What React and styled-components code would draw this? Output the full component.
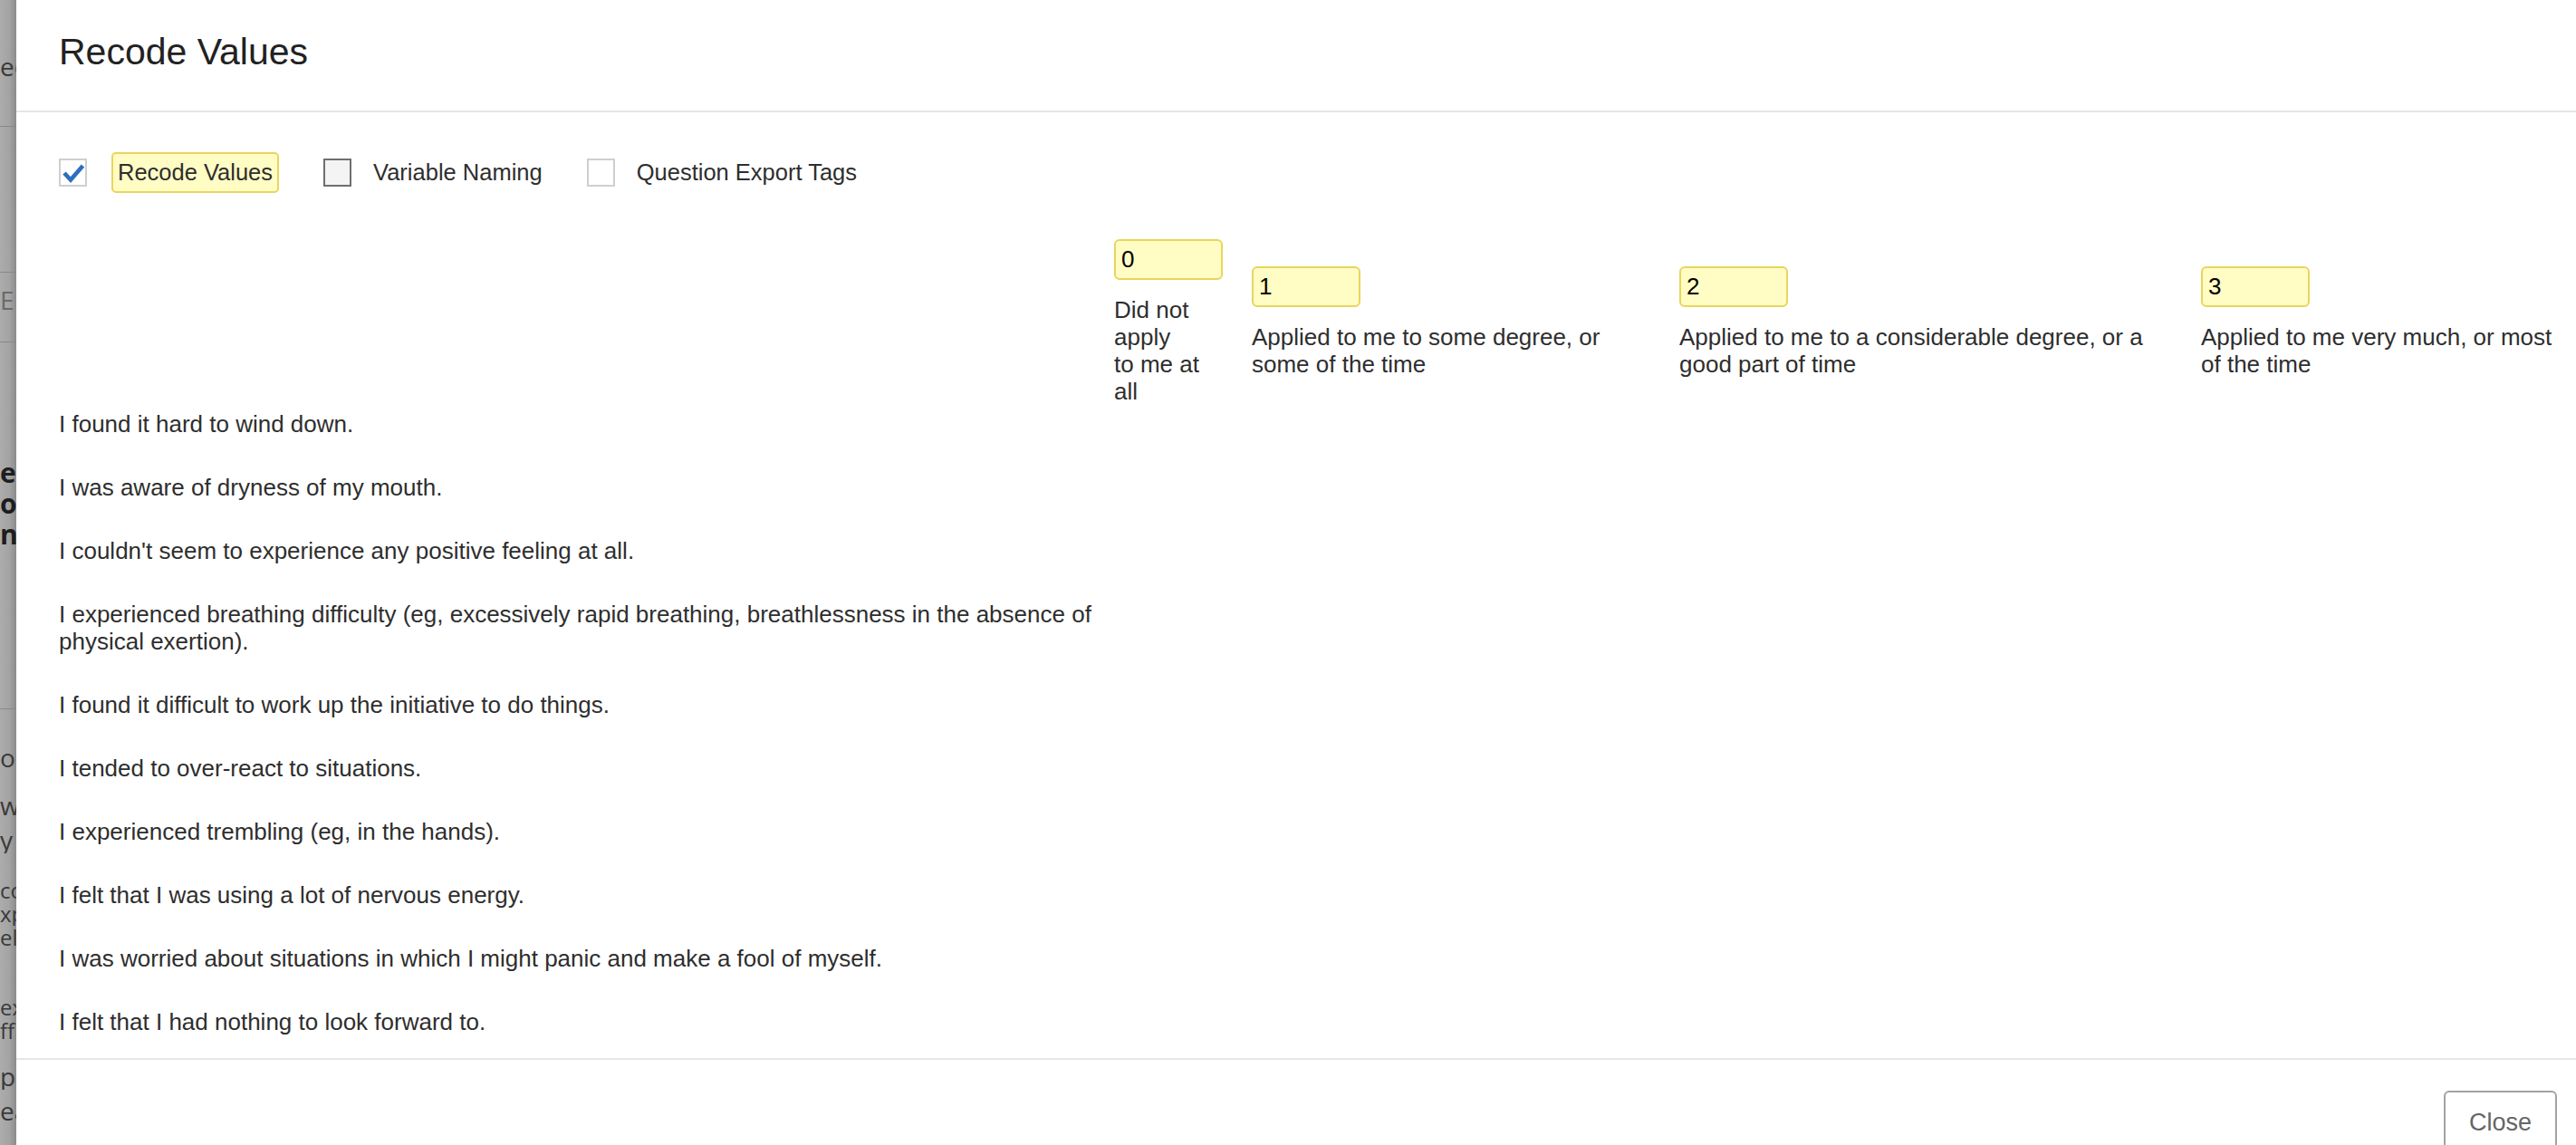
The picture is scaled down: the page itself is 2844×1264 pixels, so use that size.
import React from "react";
import styled, { createGlobalStyle } from "styled-components";

const GlobalStyle = createGlobalStyle`
  html, body {
    margin: 0;
    padding: 0;
    background: #ffffff;
    overflow: hidden;
  }
  * {
    box-sizing: border-box;
  }
  body {
    font-family: "Liberation Sans", Arial, sans-serif;
    color: #333333;
  }
`;

const backdropBits = [
  { text: "ee", mt: 58, lh: 30 },
  { rule: true, mt: 51 },
  { rule: true, mt: 160 },
  { text: "E", mt: 15, lh: 30, muted: true },
  { rule: true, mt: 31 },
  { text: "ea", mt: 127, lh: 34, bold: true },
  { text: "op", mt: 0, lh: 34, bold: true },
  { text: "nc", mt: 0, lh: 34, bold: true },
  { rule: true, mt: 175 },
  { text: "ou", mt: 38, lh: 30 },
  { text: "wa", mt: 23, lh: 30 },
  { text: "y", mt: 8, lh: 30 },
  { text: "co", mt: 28, lh: 26 },
  { text: "xp", mt: 0, lh: 26 },
  { text: "el", mt: 0, lh: 26 },
  { text: "ex", mt: 51, lh: 26 },
  { text: "ffi", mt: 0, lh: 26 },
  { text: "pi", mt: 22, lh: 30 },
  { text: "ea", mt: 8, lh: 30 },
];

const options = [
  { label: "Recode Values", checked: true, highlighted: true, tone: "light" },
  { label: "Variable Naming", checked: false, tone: "dark" },
  { label: "Question Export Tags", checked: false, tone: "light" },
];

const scale = [
  { value: "0", label: ["Did not apply", "to me at all"], width: 112 },
  { value: "1", label: ["Applied to me to some degree, or some of the time"], width: 420 },
  { value: "2", label: ["Applied to me to a considerable degree, or a good part of time"], width: 540 },
  { value: "3", label: ["Applied to me very much, or most of the time"], width: 400 },
];

const statements = [
  "I found it hard to wind down.",
  "I was aware of dryness of my mouth.",
  "I couldn't seem to experience any positive feeling at all.",
  "I experienced breathing difficulty (eg, excessively rapid breathing, breathlessness in the absence of physical exertion).",
  "I found it difficult to work up the initiative to do things.",
  "I tended to over-react to situations.",
  "I experienced trembling (eg, in the hands).",
  "I felt that I was using a lot of nervous energy.",
  "I was worried about situations in which I might panic and make a fool of myself.",
  "I felt that I had nothing to look forward to.",
];

export default function App() {
  return (
    <>
      <GlobalStyle />
      <Page>
        <Backdrop>
          {backdropBits.map((bit, i) =>
            bit.rule ? (
              <BackdropRule key={i} $mt={bit.mt} />
            ) : (
              <BackdropText key={i} $mt={bit.mt} $lh={bit.lh} $bold={bit.bold} $muted={bit.muted}>
                {bit.text}
              </BackdropText>
            )
          )}
        </Backdrop>

        <Modal>
          <Header>
            <Title>Recode Values</Title>
          </Header>

          <Body>
            <OptionBar>
              {options.map((opt) => (
                <Option key={opt.label}>
                  <Checkbox $tone={opt.tone}>
                    {opt.checked ? (
                      <svg width="26" height="26" viewBox="0 0 26 26">
                        <path
                          d="M3 13 L10 20.5 L23.5 5"
                          fill="none"
                          stroke="#2d6fbd"
                          strokeWidth="4.6"
                          strokeLinejoin="miter"
                        />
                      </svg>
                    ) : null}
                  </Checkbox>
                  <OptionLabel $highlighted={opt.highlighted}>{opt.label}</OptionLabel>
                </Option>
              ))}
            </OptionBar>

            <ScaleHeader>
              <div />
              {scale.map((s) => (
                <ScaleCell key={s.value}>
                  <ValueInput defaultValue={s.value} />
                  <ScaleLabel $width={s.width}>
                    {s.label.map((line, i) => (
                      <React.Fragment key={i}>
                        {i > 0 ? <br /> : null}
                        {line}
                      </React.Fragment>
                    ))}
                  </ScaleLabel>
                </ScaleCell>
              ))}
            </ScaleHeader>

            <StatementList>
              {statements.map((s) => (
                <Statement key={s}>{s}</Statement>
              ))}
            </StatementList>
          </Body>

          <Footer>
            <CloseButton>Close</CloseButton>
          </Footer>
        </Modal>
      </Page>
    </>
  );
}

const Page = styled.div`
  display: flex;
  width: 2844px;
  height: 1264px;
  overflow: hidden;
`;

const Backdrop = styled.div`
  flex: none;
  width: 18px;
  height: 100%;
  overflow: hidden;
  display: flex;
  flex-direction: column;
  background: linear-gradient(to right, #acacac 0%, #a4a4a4 55%, #8c8c8c 100%);
`;

const BackdropText = styled.div`
  flex: none;
  margin-top: ${(p) => p.$mt}px;
  height: ${(p) => p.$lh}px;
  line-height: ${(p) => p.$lh}px;
  font-size: ${(p) => (p.$bold ? 30 : p.$lh - 2)}px;
  font-weight: ${(p) => (p.$bold ? 700 : 400)};
  color: ${(p) => (p.$bold ? "#1e1e1e" : p.$muted ? "#6a6a6a" : "#3a3a3a")};
  white-space: nowrap;
  overflow: hidden;
  font-family: "Open Sans", "Liberation Sans", sans-serif;
`;

const BackdropRule = styled.div`
  margin-top: ${(p) => p.$mt}px;
  height: 1px;
  flex: none;
  background: #888888;
`;

const Modal = styled.div`
  flex: 1;
  display: flex;
  flex-direction: column;
  background: #ffffff;
  min-width: 0;
`;

const Header = styled.div`
  height: 124px;
  flex: none;
  display: flex;
  align-items: center;
  padding: 0 0 8px 47px;
  border-bottom: 2px solid #e6e6e6;
`;

const Title = styled.h1`
  margin: 0;
  font-size: 41px;
  font-weight: 400;
  color: #222222;
`;

const Body = styled.div`
  height: 1044px;
  flex: none;
  overflow: hidden;
  padding: 44px 0 0 47px;
`;

const OptionBar = styled.div`
  display: flex;
  align-items: center;
  gap: 49px;
  height: 45px;
`;

const Option = styled.div`
  display: flex;
  align-items: center;
  gap: 24px;
`;

const Checkbox = styled.span`
  width: 31px;
  height: 31px;
  display: flex;
  align-items: center;
  justify-content: center;
  border: 2px solid ${(p) => (p.$tone === "dark" ? "#6f6f6f" : "#cfcfcf")};
  background: ${(p) => (p.$tone === "dark" ? "#f4f4f4" : "#ffffff")};
`;

const OptionLabel = styled.span`
  font-size: 25.5px;
  color: #2e2e2e;
  line-height: 41px;
  ${(p) =>
    p.$highlighted
      ? `
    margin-left: 3px;
    padding: 0 5px;
    border: 2px solid #e9d55d;
    border-radius: 5px;
    background: #fffcc4;
  `
      : ""}
`;

const ScaleHeader = styled.div`
  display: grid;
  grid-template-columns: 1165px 152px 472px 576px 1fr;
  align-items: center;
  margin-top: 51px;
`;

const ScaleCell = styled.div`
  display: flex;
  flex-direction: column;
  align-items: flex-start;
  gap: 18px;
`;

const ValueInput = styled.input`
  width: 120px;
  height: 45px;
  padding: 0 6px;
  border: 2px solid #e9d55d;
  border-radius: 6px;
  background: #fffcc4;
  font-family: "Liberation Sans", Arial, sans-serif;
  font-size: 26px;
  color: #000000;
  outline: none;
`;

const ScaleLabel = styled.div`
  width: ${(p) => p.$width}px;
  font-size: 26px;
  line-height: 30px;
  color: #2e2e2e;
`;

const StatementList = styled.div`
  margin-top: 6px;
  display: flex;
  flex-direction: column;
`;

const Statement = styled.div`
  width: 1150px;
  font-size: 26px;
  line-height: 30px;
  color: #2e2e2e;
  padding-bottom: 40px;
`;

const Footer = styled.div`
  flex: none;
  display: flex;
  justify-content: flex-end;
  padding: 34px 21px 0 0;
  border-top: 2px solid #e6e6e6;
`;

const CloseButton = styled.button`
  width: 125px;
  height: 70px;
  border: 2px solid #a3a3a3;
  border-radius: 6px;
  background: #ffffff;
  font-family: "Liberation Sans", Arial, sans-serif;
  font-size: 27px;
  color: #666666;
`;
